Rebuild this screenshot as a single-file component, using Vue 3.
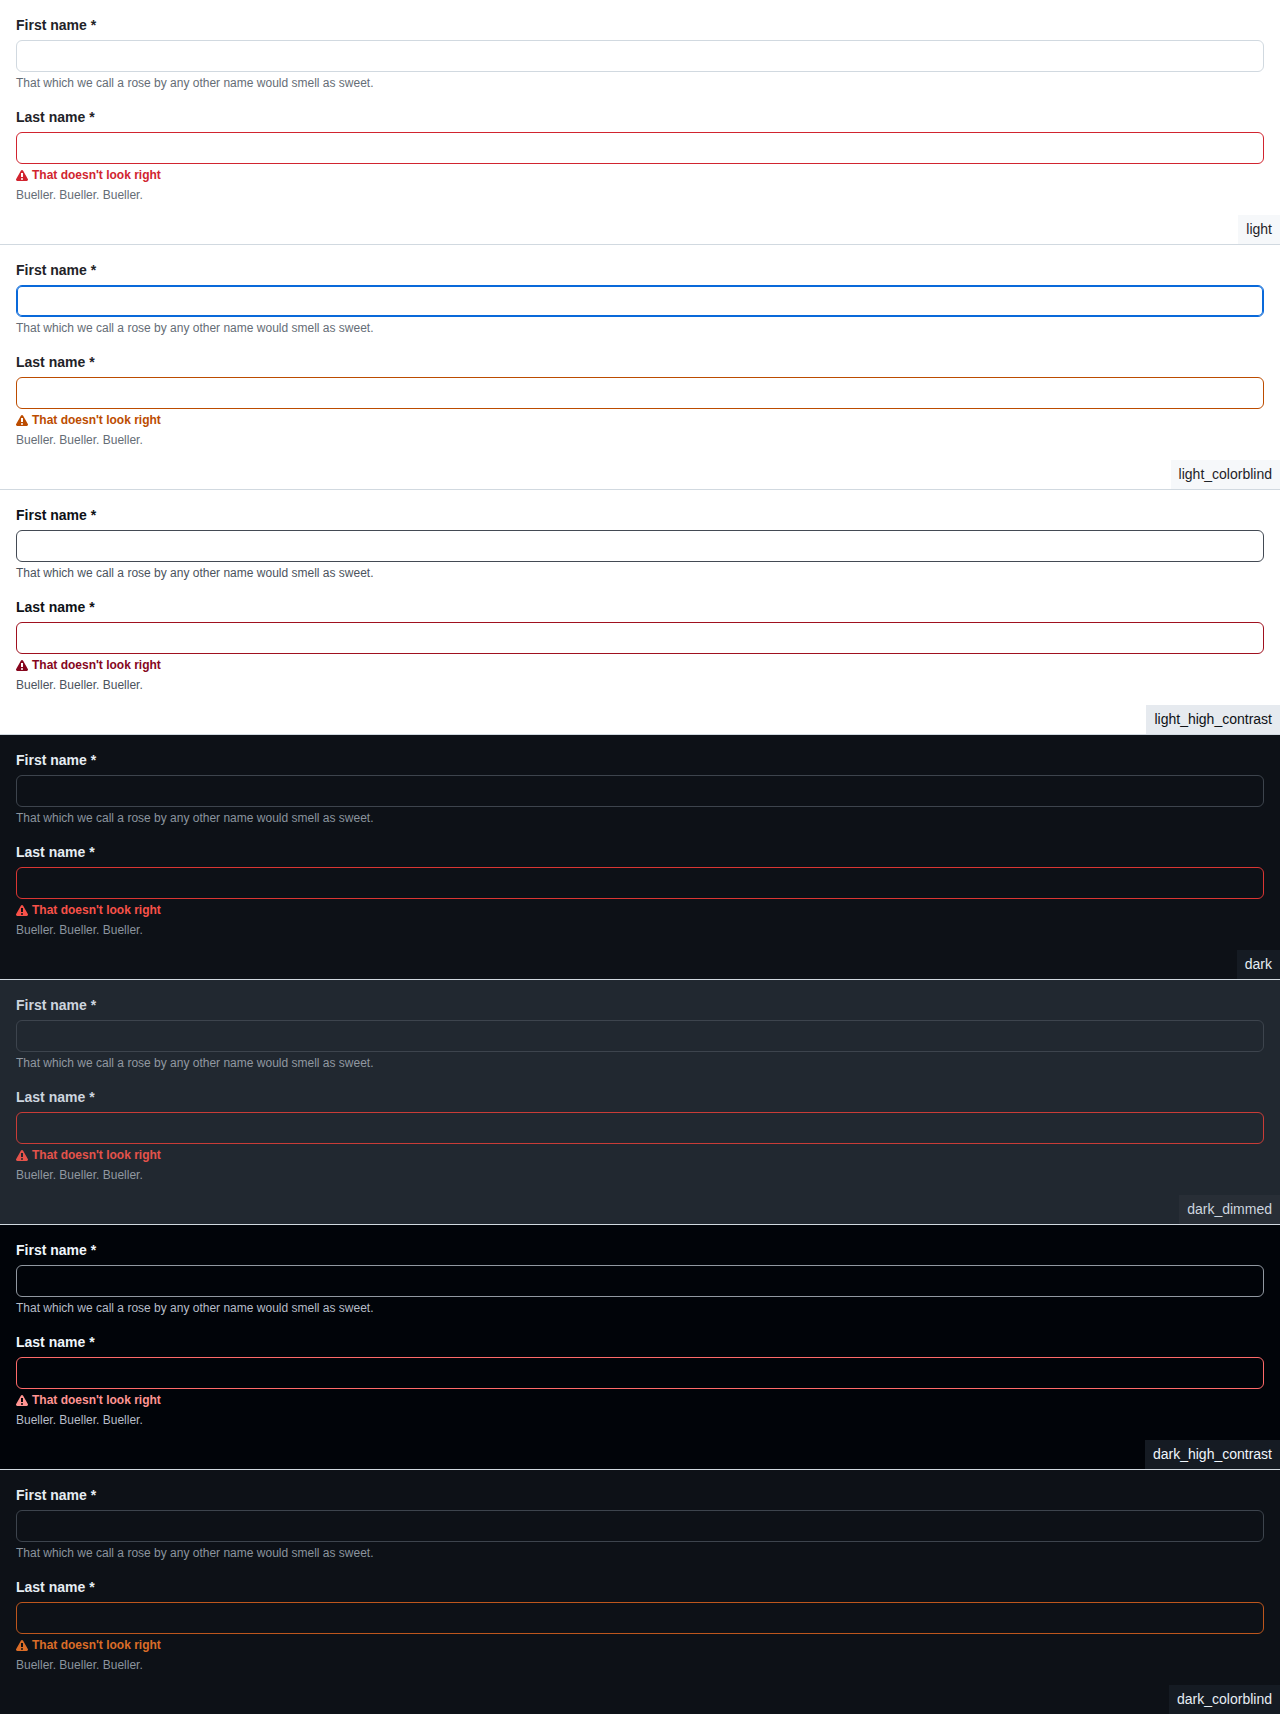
<template>
  <div class="page">
    <section v-for="t in themes" :key="t.name" class="story" :class="t.name">
      <div class="field">
        <label>First name *</label>
        <input type="text" class="input" :class="{ focused: t.focus }" />
        <p class="caption">That which we call a rose by any other name would smell as sweet.</p>
      </div>
      <div class="field">
        <label>Last name *</label>
        <input type="text" class="input invalid" />
        <p class="error">
          <svg width="12" height="12" viewBox="0 0 12 12" fill="currentColor">
            <path fill-rule="evenodd" d="M4.855.708c.5-.896 1.79-.896 2.29 0l4.675 8.351a1.312 1.312 0 0 1-1.145 1.954H1.325A1.313 1.313 0 0 1 .18 9.058ZM7 7V3H5v4Zm-1 3a1 1 0 1 0 0-2 1 1 0 0 0 0 2Z" />
          </svg>
          That doesn't look right
        </p>
        <p class="caption">Bueller. Bueller. Bueller.</p>
      </div>
      <span class="tag">{{ t.name }}</span>
    </section>
  </div>
</template>

<script setup>
const themes = [
  { name: 'light' },
  { name: 'light_colorblind', focus: true },
  { name: 'light_high_contrast' },
  { name: 'dark' },
  { name: 'dark_dimmed' },
  { name: 'dark_high_contrast' },
  { name: 'dark_colorblind' },
]
</script>

<style>
html,
body {
  margin: 0;
}
</style>

<style scoped>
.page {
  width: 1280px;
  font-family: 'Liberation Sans', Arial, sans-serif;
}

.story {
  position: relative;
  box-sizing: border-box;
  height: 245px;
  padding: 16px;
  display: flex;
  flex-direction: column;
  gap: 16px;
  background: var(--bg);
  color: var(--fg);
  border-bottom: 1px solid #d1d9e0;
}

.story:last-child {
  height: 244px;
  border-bottom: 0;
}

.field {
  display: flex;
  flex-direction: column;
}

label {
  font-size: 14px;
  line-height: 18px;
  padding-bottom: 2px;
  font-weight: 600;
  margin-bottom: 4px;
}

.input {
  box-sizing: border-box;
  display: block;
  width: 100%;
  height: 32px;
  padding: 0 12px;
  margin: 0;
  background: transparent;
  color: inherit;
  border: 1px solid var(--border);
  border-radius: 6px;
  outline: none;
}

.input.invalid {
  border-color: var(--danger-border);
}

.input.focused {
  border-color: #0969da;
  box-shadow: inset 0 0 0 1px #0969da;
}

.caption {
  margin: 4px 0 0;
  font-size: 12px;
  line-height: 14px;
  padding-bottom: 2px;
  color: var(--muted);
}

.error {
  display: flex;
  align-items: flex-start;
  gap: 4px;
  margin: 4px 0 0;
  font-size: 12px;
  line-height: 14px;
  padding-bottom: 2px;
  font-weight: 600;
  color: var(--danger);
}

.error svg {
  margin-top: 2px;
}

.tag {
  position: absolute;
  right: 0;
  bottom: 0;
  padding: 4px 8px;
  font-size: 14px;
  line-height: 21px;
  background: var(--subtle);
}

.light {
  --bg: #ffffff;
  --fg: #1f2328;
  --muted: #656d76;
  --border: #d1d9e0;
  --danger: #d1242f;
  --danger-border: #d1242f;
  --subtle: #f6f8fa;
}

.light_colorblind {
  --bg: #ffffff;
  --fg: #1f2328;
  --muted: #656d76;
  --border: #d1d9e0;
  --danger: #bc4c00;
  --danger-border: #bc4c00;
  --subtle: #f6f8fa;
}

.light_high_contrast {
  --bg: #ffffff;
  --fg: #0e1116;
  --muted: #4b535d;
  --border: #434a54;
  --danger: #86061d;
  --danger-border: #a0111f;
  --subtle: #e6eaef;
}

.dark {
  --bg: #0d1117;
  --fg: #e6edf3;
  --muted: #8b949e;
  --border: #3d444d;
  --danger: #f85149;
  --danger-border: #da3633;
  --subtle: #151b23;
}

.dark_dimmed {
  --bg: #212830;
  --fg: #cdd5df;
  --muted: #9198a1;
  --border: #3d444d;
  --danger: #e5534b;
  --danger-border: #c93c37;
  --subtle: #282e36;
}

.dark_high_contrast {
  --bg: #010409;
  --fg: #f0f6fc;
  --muted: #b7bdc8;
  --border: #9198a1;
  --danger: #ff9492;
  --danger-border: #ff6a69;
  --subtle: #151b23;
}

.dark_colorblind {
  --bg: #0d1117;
  --fg: #e6edf3;
  --muted: #8b949e;
  --border: #3d444d;
  --danger: #db6d28;
  --danger-border: #bd561d;
  --subtle: #151b23;
}
</style>
